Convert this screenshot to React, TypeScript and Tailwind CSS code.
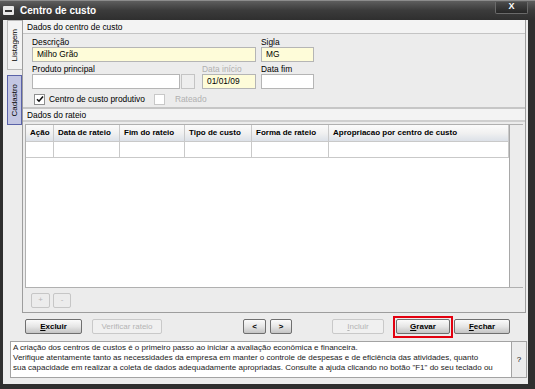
import React from "react";

const Field = ({ className, value = "", yellow = false }: { className: string; value?: string; yellow?: boolean }) => (
  <div
    className={`h-[15px] border border-[#b5b5b5] px-[4px] text-[8.4px] leading-[13px] text-black ${
      yellow ? "bg-[#fefcd9]" : "bg-white"
    } ${className}`}
  >
    {value}
  </div>
);

const Button = ({
  label,
  className,
  disabled = false,
  mnemonic = true,
}: {
  label: string;
  className: string;
  disabled?: boolean;
  mnemonic?: boolean;
}) => (
  <div
    className={`flex h-[15px] items-center justify-center rounded-[2px] border text-[8px] leading-none ${
      disabled
        ? "border-[#c9c9c9] bg-[#f0f0f0] text-[#b4b4b4]"
        : "border-[#6f6f6f] bg-linear-to-b from-[#fbfbfb] via-[#e6e6e6] to-[#c4c4c4] font-bold text-black"
    } ${className}`}
  >
    {mnemonic ? (
      <>
        <u>{label[0]}</u>
        {label.slice(1)}
      </>
    ) : (
      label
    )}
  </div>
);

const Check = ({ checked, disabled }: { checked?: boolean; disabled?: boolean }) => (
  <div
    className={`flex h-[11px] w-[11px] items-center justify-center border bg-white ${
      disabled ? "border-[#c8c8c8]" : "border-[#8e8f8f]"
    }`}
  >
    {checked && (
      <svg width="8" height="8" viewBox="0 0 8 8">
        <path d="M1 4.2 L3 6.2 L7 1.6" fill="none" stroke="#111" strokeWidth="1.6" />
      </svg>
    )}
  </div>
);

const columns = [
  { name: "Ação", w: "w-[28px]" },
  { name: "Data de rateio", w: "w-[66px]" },
  { name: "Fim do rateio", w: "w-[65px]" },
  { name: "Tipo de custo", w: "w-[67px]" },
  { name: "Forma de rateio", w: "w-[77px]" },
  { name: "Apropriacao por centro de custo", w: "flex-1" },
];

export default function App() {
  return (
    <div className="flex h-[389px] w-[535px] flex-col bg-[#2f2f2f] font-['Liberation_Sans',Arial,sans-serif] text-black">
      {/* title bar */}
      <div className="flex h-[20px] items-center border-t border-[#8c8c8c] bg-linear-to-b from-[#5e5e5e] via-[#3b3b3b] to-[#2f2f2f] pl-[3px] pr-[7px]">
        <div className="flex h-[9px] w-[11px] items-center justify-center rounded-[1px] bg-[#e8e8e8]">
          <div className="h-[2px] w-[7px] bg-[#333]" />
        </div>
        <span className="ml-[6px] text-[10px] font-bold text-white">Centro de custo</span>
        <div className="mb-[6px] ml-auto flex h-[12px] w-[33px] items-center justify-center rounded-b-[2px] border border-t-0 border-[#6a6a6a] bg-linear-to-b from-[#4a4a4a] to-[#262626] text-[9px] font-bold text-white">
          X
        </div>
      </div>

      {/* window body */}
      <div className="ml-[3px] mr-[7px] mb-[5px] flex flex-1 flex-col bg-[#ececec]">
        <div className="flex h-[293px]">
          {/* side tabs */}
          <div className="flex w-[19px] flex-col pl-[4px]">
            <div className="flex h-[50px] items-center justify-center border border-r-0 border-[#b9b9b9] bg-[#f3f3f3]">
              <span className="rotate-180 text-[8px] [writing-mode:vertical-rl]">Listagem</span>
            </div>
            <div className="mt-[5px] flex h-[50px] items-center justify-center border border-[#5a62a8] bg-[#c3c6e2]">
              <span className="rotate-180 text-[8px] [writing-mode:vertical-rl]">Cadastro</span>
            </div>
          </div>

          {/* main panel */}
          <div className="mr-[2px] flex flex-1 flex-col border-x border-b border-[#9d9d9d]">
            <div className="h-[14px] border-b border-[#c4c4c4] bg-[#f3f3f3] pl-[4px] text-[8.4px] leading-[14px]">
              Dados do centro de custo
            </div>
            <div className="flex h-[73px] flex-col px-[9px] pt-[3px]">
              <div className="flex gap-[5px]">
                <div className="flex flex-col">
                  <span className="h-[10px] text-[8.4px] leading-[10px]">Descrição</span>
                  <Field className="w-[224px]" value="Milho Grão" yellow />
                </div>
                <div className="flex flex-col">
                  <span className="h-[10px] text-[8.4px] leading-[10px]">Sigla</span>
                  <Field className="w-[53px]" value="MG" yellow />
                </div>
              </div>
              <div className="mt-[2px] flex gap-[5px]">
                <div className="flex flex-col">
                  <span className="h-[10px] text-[8.4px] leading-[10px]">Produto principal</span>
                  <div className="flex">
                    <Field className="w-[148px]" />
                    <div className="ml-[1px] h-[15px] w-[14px] border border-[#c4c4c4] bg-[#eeeeee]" />
                  </div>
                </div>
                <div className="ml-[2px] flex flex-col">
                  <span className="h-[10px] text-[8.4px] leading-[10px] text-[#b0b0b0]">Data início</span>
                  <Field className="w-[54px]" value="01/01/09" yellow />
                </div>
                <div className="flex flex-col">
                  <span className="h-[10px] text-[8.4px] leading-[10px]">Data fim</span>
                  <Field className="w-[53px]" />
                </div>
              </div>
              <div className="mt-[4px] flex items-center pl-[2px] text-[8.4px]">
                <Check checked />
                <span className="ml-[4px]">Centro de custo produtivo</span>
                <div className="ml-[9px]">
                  <Check disabled />
                </div>
                <span className="ml-[10px] text-[#b0b0b0]">Rateado</span>
              </div>
            </div>

            <div className="h-[15px] border-y-2 border-t-[#c6c6c6] border-b-[#cfcfcf] bg-[#f3f3f3] pl-[4px] text-[8.4px] leading-[12px]">
              Dados do rateio
            </div>

            {/* table */}
            <div className="mx-[2px] mt-[2px] flex h-[164px] border-y border-l border-[#b0b0b0]">
              <div className="flex flex-1 flex-col border-r border-[#a8a8a8] bg-white">
                <div className="flex h-[16px] bg-linear-to-b from-[#fbfbfb] via-[#f1f1f1] to-[#dce1e8] text-[8px] font-bold">
                  {columns.map((c) => (
                    <div key={c.name} className={`${c.w} border-r border-[#c9c9c9] pl-[4px] leading-[16px]`}>
                      {c.name}
                    </div>
                  ))}
                </div>
                <div className="flex h-[17px] border-y border-[#c9c9c9]">
                  {columns.map((c) => (
                    <div key={c.name} className={`${c.w} border-r border-[#c9c9c9]`} />
                  ))}
                </div>
              </div>
              <div className="w-[13px] bg-[#ececec]" />
            </div>
            <div className="flex flex-1 items-center gap-[3px] pl-[8px]">
              <div className="flex h-[15px] w-[19px] items-center justify-center rounded-[2px] border border-[#c6c6c6] text-[8px] text-[#b4b4b4]">
                +
              </div>
              <div className="flex h-[15px] w-[18px] items-center justify-center rounded-[2px] border border-[#c6c6c6] text-[8px] text-[#b4b4b4]">
                -
              </div>
            </div>
          </div>
        </div>

        {/* buttons */}
        <div className="flex h-[27px] items-center pl-[22px]">
          <Button label="Excluir" className="w-[57px]" />
          <Button label="Verificar rateio" className="ml-[10px] w-[70px]" disabled mnemonic={false} />
          <Button label="<" className="ml-[81px] w-[23px]" mnemonic={false} />
          <Button label=">" className="ml-[4px] w-[22px]" mnemonic={false} />
          <Button label="Incluir" className="ml-[40px] w-[52px]" disabled />
          <div className="ml-[9px] flex h-[22px] w-[60px] items-center justify-center border-2 border-[#e3000f]">
            <Button label="Gravar" className="w-[54px]" />
          </div>
          <Button label="Fechar" className="ml-[1px] w-[56px]" />
        </div>

        {/* help */}
        <div className="ml-[7px] mr-[1px] mt-[1px] flex h-[37px]">
          <div className="flex-1 border border-[#a3a3a3] bg-white px-[2px] pt-[1px] text-[8px] leading-[10px] text-[#1a1a1a]">
            <p>A criação dos centros de custos é o primeiro passo ao iniciar a avaliação econômica e financeira.</p>
            <p>Verifique atentamente tanto as necessidades da empresa em manter o controle de despesas e de eficiência das atividades, quanto</p>
            <p className="whitespace-nowrap">sua capacidade em realizar a coleta de dados adequadamente apropriadas. Consulte a ajuda clicando no botão "F1" do seu teclado ou</p>
          </div>
          <div className="flex w-[15px] items-center justify-center border-y border-r border-[#a3a3a3] text-[8px]">?</div>
        </div>
      </div>
    </div>
  );
}
